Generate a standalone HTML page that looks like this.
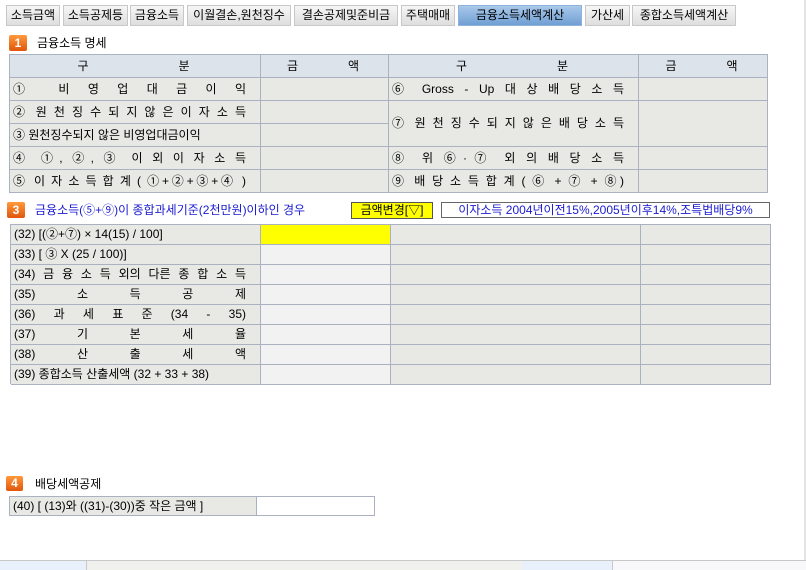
<!DOCTYPE html>
<html><head><meta charset="utf-8"><style>
*{margin:0;padding:0;box-sizing:border-box}
body{width:806px;height:570px;background:#fff;position:relative;overflow:hidden;font-family:"Liberation Sans","Noto Sans CJK KR",sans-serif;font-size:12px;color:#000}
.a{position:absolute}
.tab{position:absolute;top:5px;height:21px;border:1px solid #c8c8c8;background:linear-gradient(#f6f6f6,#dedede);font-size:12px;line-height:19px;text-align:center;white-space:nowrap}
.tab.on{background:linear-gradient(#a9c8ea,#6f9fd3);border-color:#8fb2db}
.ic{position:absolute;width:18px;height:16px;background:linear-gradient(#ff9a3c,#e0560c);border-radius:2px;color:#fff;font-weight:bold;font-size:12px;text-align:center;line-height:16px}
.c{position:absolute;border-right:1px solid #aab2c2;border-bottom:1px solid #aab2c2;background:#e8e8e4;padding:0 6px 0 3px;line-height:22px;white-space:nowrap;overflow:hidden}
.j{text-align:justify;text-align-last:justify;padding-right:14px}
.h{background:#dde3eb;text-align:center}
.t{position:absolute;border-left:1px solid #aab2c2;border-top:1px solid #aab2c2}
.n{font-family:"Noto Sans CJK KR",sans-serif;font-size:12px}
</style></head><body>
<div class="tab" style="left:6px;width:54px">소득금액</div>
<div class="tab" style="left:63px;width:65px">소득공제등</div>
<div class="tab" style="left:130px;width:54px">금융소득</div>
<div class="tab" style="left:187px;width:104px">이월결손,원천징수</div>
<div class="tab" style="left:294px;width:104px">결손공제및준비금</div>
<div class="tab" style="left:401px;width:54px">주택매매</div>
<div class="tab on" style="left:458px;width:124px">금융소득세액계산</div>
<div class="tab" style="left:585px;width:45px">가산세</div>
<div class="tab" style="left:632px;width:104px">종합소득세액계산</div>

<div class="ic" style="left:9px;top:35px">1</div>
<div class="a" style="left:37px;top:35px;line-height:16px">금융소득 명세</div>

<div class="t" style="left:9px;top:54px;width:759px;height:139px"></div>
<div class="c h" style="left:10px;top:55px;width:251px;height:23px">구 &nbsp; &nbsp; &nbsp; &nbsp; &nbsp; &nbsp; &nbsp; &nbsp; &nbsp; &nbsp; &nbsp; &nbsp; &nbsp; 분</div>
<div class="c h" style="left:261px;top:55px;width:128px;height:23px">금 &nbsp; &nbsp; &nbsp; &nbsp; &nbsp; &nbsp; &nbsp; 액</div>
<div class="c h" style="left:389px;top:55px;width:250px;height:23px">구 &nbsp; &nbsp; &nbsp; &nbsp; &nbsp; &nbsp; &nbsp; &nbsp; &nbsp; &nbsp; &nbsp; &nbsp; &nbsp; 분</div>
<div class="c h" style="left:639px;top:55px;width:129px;height:23px">금 &nbsp; &nbsp; &nbsp; &nbsp; &nbsp; &nbsp; &nbsp; 액</div>

<div class="c j" style="left:10px;top:78px;width:251px;height:23px">① 비 영 업 대 금 이 익</div>
<div class="c" style="left:261px;top:78px;width:128px;height:23px"></div>
<div class="c j" style="left:389px;top:78px;width:250px;height:23px">⑥ Gross - Up 대 상 배 당 소 득</div>
<div class="c" style="left:639px;top:78px;width:129px;height:23px"></div>

<div class="c j" style="left:10px;top:101px;width:251px;height:23px">② 원 천 징 수 되 지 않 은 이 자 소 득</div>
<div class="c" style="left:261px;top:101px;width:128px;height:23px"></div>
<div class="c j" style="left:389px;top:101px;width:250px;height:46px;line-height:45px">⑦ 원 천 징 수 되 지 않 은 배 당 소 득</div>
<div class="c" style="left:639px;top:101px;width:129px;height:46px"></div>
<div class="c" style="left:10px;top:124px;width:251px;height:23px">③ 원천징수되지 않은 비영업대금이익</div>
<div class="c" style="left:261px;top:124px;width:128px;height:23px"></div>

<div class="c j" style="left:10px;top:147px;width:251px;height:23px">④ ①, ②, ③ 이 외 이 자 소 득</div>
<div class="c" style="left:261px;top:147px;width:128px;height:23px"></div>
<div class="c j" style="left:389px;top:147px;width:250px;height:23px">⑧ 위 ⑥·⑦ 외 의 배 당 소 득</div>
<div class="c" style="left:639px;top:147px;width:129px;height:23px"></div>

<div class="c j" style="left:10px;top:170px;width:251px;height:23px">⑤ 이 자 소 득 합 계 ( ①+②+③+④ )</div>
<div class="c" style="left:261px;top:170px;width:128px;height:23px"></div>
<div class="c j" style="left:389px;top:170px;width:250px;height:23px">⑨ 배 당 소 득 합 계 ( ⑥ + ⑦ + ⑧)</div>
<div class="c" style="left:639px;top:170px;width:129px;height:23px"></div>

<div class="ic" style="left:7px;top:202px">3</div>
<div class="a" style="left:35px;top:202px;line-height:16px;color:#1a1ad0">금융소득(⑤+⑨)이 종합과세기준(2천만원)이하인 경우</div>
<div class="a" style="left:351px;top:202px;width:82px;height:17px;background:#ffff00;border:1px solid #555;line-height:15px;text-align:center">금액변경[▽]</div>
<div class="a" style="left:441px;top:202px;width:329px;height:16px;border:1px solid #666;line-height:14px;text-align:center;color:#1a1ad0">이자소득 2004년이전15%,2005년이후14%,조특법배당9%</div>

<div class="t" style="left:10px;top:224px;width:761px;height:160px"></div>
<div id="t2"></div>

<div class="ic" style="left:6px;top:476px;width:17px;height:15px;line-height:15px">4</div>
<div class="a" style="left:35px;top:476px;line-height:16px">배당세액공제</div>
<div class="t" style="left:9px;top:496px;width:366px;height:20px"></div>
<div class="c" style="left:10px;top:497px;width:247px;height:19px;line-height:18px">(40) [ (13)와 ((31)-(30))중 작은 금액 ]</div>
<div class="c" style="left:257px;top:497px;width:118px;height:19px;background:#fff"></div>

<div class="a" style="left:0;top:560px;width:806px;height:1px;background:#c8c8c8"></div>
<div class="a" style="left:0;top:561px;width:86px;height:9px;background:#e8f0fb"></div>
<div class="a" style="left:86px;top:561px;width:436px;height:9px;background:#f0f0ec;border-left:1px solid #c8c8c8"></div>
<div class="a" style="left:522px;top:561px;width:90px;height:9px;background:#e8f0fb"></div>
<div class="a" style="left:612px;top:561px;width:194px;height:9px;background:#f8f8fa;border-left:1px solid #c8c8c8"></div>
<div class="a" style="left:804px;top:0;width:2px;height:560px;background:#e4e4e4"></div>

<script>
var rows=[["(32) [(②+⑦) × 14(15) / 100]",0],["(33) [ ③ X (25 / 100)]",0],["(34) 금 융 소 득 외의 다른 종 합 소 득",1],["(35) 소 득 공 제",1],["(36) 과 세 표 준 (34 - 35)",1],["(37) 기 본 세 율",1],["(38) 산 출 세 액",1],["(39) 종합소득 산출세액 (32 + 33 + 38)",0]];
var h="";
rows.forEach(function(r,i){var y=225+i*20;
h+='<div class="c'+(r[1]?' j':'')+'" style="left:11px;top:'+y+'px;width:250px;height:20px;line-height:19px">'+r[0]+'</div>';
h+='<div class="c" style="left:261px;top:'+y+'px;width:130px;height:20px;background:'+(i==0?'#ffff00':'#f2f2f2')+'"></div>';
h+='<div class="c" style="left:391px;top:'+y+'px;width:250px;height:20px"></div>';
h+='<div class="c" style="left:641px;top:'+y+'px;width:130px;height:20px"></div>';});
document.getElementById("t2").outerHTML=h;
</script>
</body></html>
